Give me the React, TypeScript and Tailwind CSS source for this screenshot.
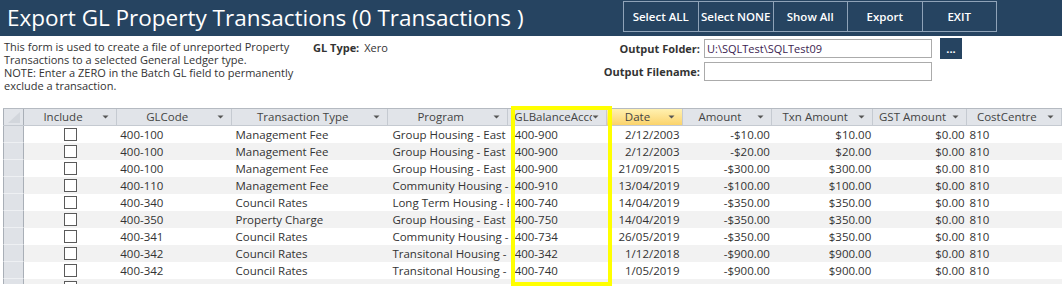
import React from "react"

type Row = {
  gl: string
  type: string
  program: string
  bal: string
  date: string
  amt: string
  txn: string
  gst: string
  cc: string
}

const rows: Row[] = [
  { gl: "400-100", type: "Management Fee", program: "Group Housing - East", bal: "400-900", date: "2/12/2003", amt: "-$10.00", txn: "$10.00", gst: "$0.00", cc: "810" },
  { gl: "400-100", type: "Management Fee", program: "Group Housing - East", bal: "400-900", date: "2/12/2003", amt: "-$20.00", txn: "$20.00", gst: "$0.00", cc: "810" },
  { gl: "400-100", type: "Management Fee", program: "Group Housing - East", bal: "400-900", date: "21/09/2015", amt: "-$300.00", txn: "$300.00", gst: "$0.00", cc: "810" },
  { gl: "400-110", type: "Management Fee", program: "Community Housing - East", bal: "400-910", date: "13/04/2019", amt: "-$100.00", txn: "$100.00", gst: "$0.00", cc: "810" },
  { gl: "400-340", type: "Council Rates", program: "Long Term Housing - East", bal: "400-740", date: "14/04/2019", amt: "-$350.00", txn: "$350.00", gst: "$0.00", cc: "810" },
  { gl: "400-350", type: "Property Charge", program: "Group Housing - East", bal: "400-750", date: "14/04/2019", amt: "-$350.00", txn: "$350.00", gst: "$0.00", cc: "810" },
  { gl: "400-341", type: "Council Rates", program: "Community Housing - East", bal: "400-734", date: "26/05/2019", amt: "-$350.00", txn: "$350.00", gst: "$0.00", cc: "810" },
  { gl: "400-342", type: "Council Rates", program: "Transitonal Housing - East", bal: "400-342", date: "1/12/2018", amt: "-$900.00", txn: "$900.00", gst: "$0.00", cc: "810" },
  { gl: "400-342", type: "Council Rates", program: "Transitonal Housing - East", bal: "400-740", date: "1/05/2019", amt: "-$900.00", txn: "$900.00", gst: "$0.00", cc: "810" },
  { gl: "400-342", type: "Council Rates", program: "Transitonal Housing - East", bal: "400-740", date: "1/05/2019", amt: "-$900.00", txn: "$900.00", gst: "$0.00", cc: "810" },
]

const font = { fontFamily: "'Open Sans', 'Noto Sans', sans-serif" }

function Arrow() {
  return (
    <svg width="7" height="4" viewBox="0 0 7 4" className="shrink-0">
      <path d="M0.5 0.5h6L3.5 3.5z" fill="#555" />
    </svg>
  )
}

function HeaderCell({ label, w, left, active }: { label: string; w: string; left?: boolean; active?: boolean }) {
  return (
    <div
      className={`${w} h-full flex items-center border-r border-[#c5cad1] pr-[7px] ${
        active ? "bg-gradient-to-b from-[#fff1b0] to-[#fbd36a]" : ""
      }`}
    >
      <span
        className={`flex-1 overflow-hidden whitespace-nowrap ${left ? "pl-[6px] text-left" : "text-center"}`}
      >
        {label}
      </span>
      <Arrow />
    </div>
  )
}

export default function App() {
  return (
    <div className="w-[1062px] h-[291px] overflow-hidden bg-white text-[#333]" style={font}>
      {/* Title bar */}
      <div className="h-[36px] bg-[#264461] flex items-center">
        <h1 className="pl-[7px] text-white text-[22.5px] leading-none whitespace-nowrap flex-1">
          Export GL Property Transactions (0 Transactions )
        </h1>
        <div className="flex h-[31px] mr-[65px] -mt-[3px] border border-[#8fa3b8]">
          {["Select ALL", "Select NONE", "Show All", "Export", "EXIT"].map((b, i) => (
            <button
              key={b}
              className={`w-[74.5px] h-full text-white text-[11.5px] font-semibold flex items-center justify-center ${
                i > 0 ? "border-l border-[#8fa3b8]" : ""
              }`}
            >
              {b}
            </button>
          ))}
        </div>
      </div>

      {/* Info area */}
      <div className="h-[72px] flex text-[11px] leading-[13px] pt-[4px]">
        <p className="w-[300px] pl-[4px]">
          This form is used to create a file of unreported Property Transactions to a selected General Ledger type.
          <br />
          NOTE: Enter a ZERO in the Batch GL field to permanently exclude a transaction.
        </p>
        <div className="flex gap-[5px] ml-[13px] pt-[1px]">
          <span className="font-bold">GL Type:</span>
          <span>Xero</span>
        </div>
        <div className="ml-auto mr-[100px] flex flex-col gap-[3px] -mt-[2px]">
          <div className="flex items-center">
            <span className="w-[170px] text-right font-bold pr-[4px]">Output Folder:</span>
            <div className="w-[228px] h-[19px] border border-[#ababab] flex items-center pl-[2px] text-[#3b2350]">
              U:\SQLTest\SQLTest09
            </div>
            <div className="ml-[8px] w-[22px] h-[21px] bg-[#264461] text-white font-bold flex items-center justify-center">
              ...
            </div>
          </div>
          <div className="flex items-center">
            <span className="w-[170px] text-right font-bold pr-[4px]">Output Filename:</span>
            <div className="w-[228px] h-[19px] border border-[#ababab]" />
          </div>
        </div>
      </div>

      {/* Datasheet */}
      <div className="relative">
        <div className="h-[176px] overflow-hidden pl-[3px] text-[11.5px]">
          <div className="flex h-[18px] border-t border-[#b5bac1] border-b border-b-[#c5cad1] bg-[#e1e4e9] text-[#444]">
            <div className="w-[21px] h-full border-l border-r border-[#a9afb7] relative">
              <svg width="21" height="17" viewBox="0 0 21 17" className="absolute inset-0">
                <path d="M4 14L16 3v11z" fill="#d2d6dc" />
              </svg>
            </div>
            <HeaderCell label="Include" w="w-[94px]" />
            <HeaderCell label="GLCode" w="w-[116px]" />
            <HeaderCell label="Transaction Type" w="w-[157px]" />
            <HeaderCell label="Program" w="w-[121px]" />
            <HeaderCell label="GLBalanceAccount" w="w-[99px]" left />
            <HeaderCell label="Date" w="w-[76px]" active />
            <HeaderCell label="Amount" w="w-[90px]" />
            <HeaderCell label="Txn Amount" w="w-[102px]" />
            <HeaderCell label="GST Amount" w="w-[94px]" />
            <HeaderCell label="CostCentre" w="w-[96px]" />
          </div>
          {rows.map((r, i) => (
            <div key={i} className={`flex h-[17px] items-center ${i % 2 ? "bg-[#f2f2f2]" : "bg-white"}`}>
              <div className="w-[21px] h-full bg-[#dfe2e7] border-l border-r border-[#a9afb7] border-b border-b-[#eef0f3]" />
              <div className="w-[94px] flex justify-center">
                <div className="w-[13px] h-[13px] border border-[#5a5a5a] bg-white" />
              </div>
              <div className="w-[116px] pl-[3px]">{r.gl}</div>
              <div className="w-[157px] pl-[3px]">{r.type}</div>
              <div className="w-[121px] pl-[4px] overflow-hidden whitespace-nowrap">{r.program}</div>
              <div className="w-[99px] pl-[6px]">{r.bal}</div>
              <div className="w-[76px] pr-[3px] text-right">{r.date}</div>
              <div className="w-[90px] pr-[2px] text-right">{r.amt}</div>
              <div className="w-[102px] pr-[2px] text-right">{r.txn}</div>
              <div className="w-[94px] pr-[2px] text-right">{r.gst}</div>
              <div className="w-[96px] pl-[3px]">{r.cc}</div>
            </div>
          ))}
        </div>
        {/* highlight box */}
        <div className="absolute left-[511px] top-[-2px] w-[101px] h-[180px] border-4 border-[#ffff00] pointer-events-none" />
      </div>
    </div>
  )
}
